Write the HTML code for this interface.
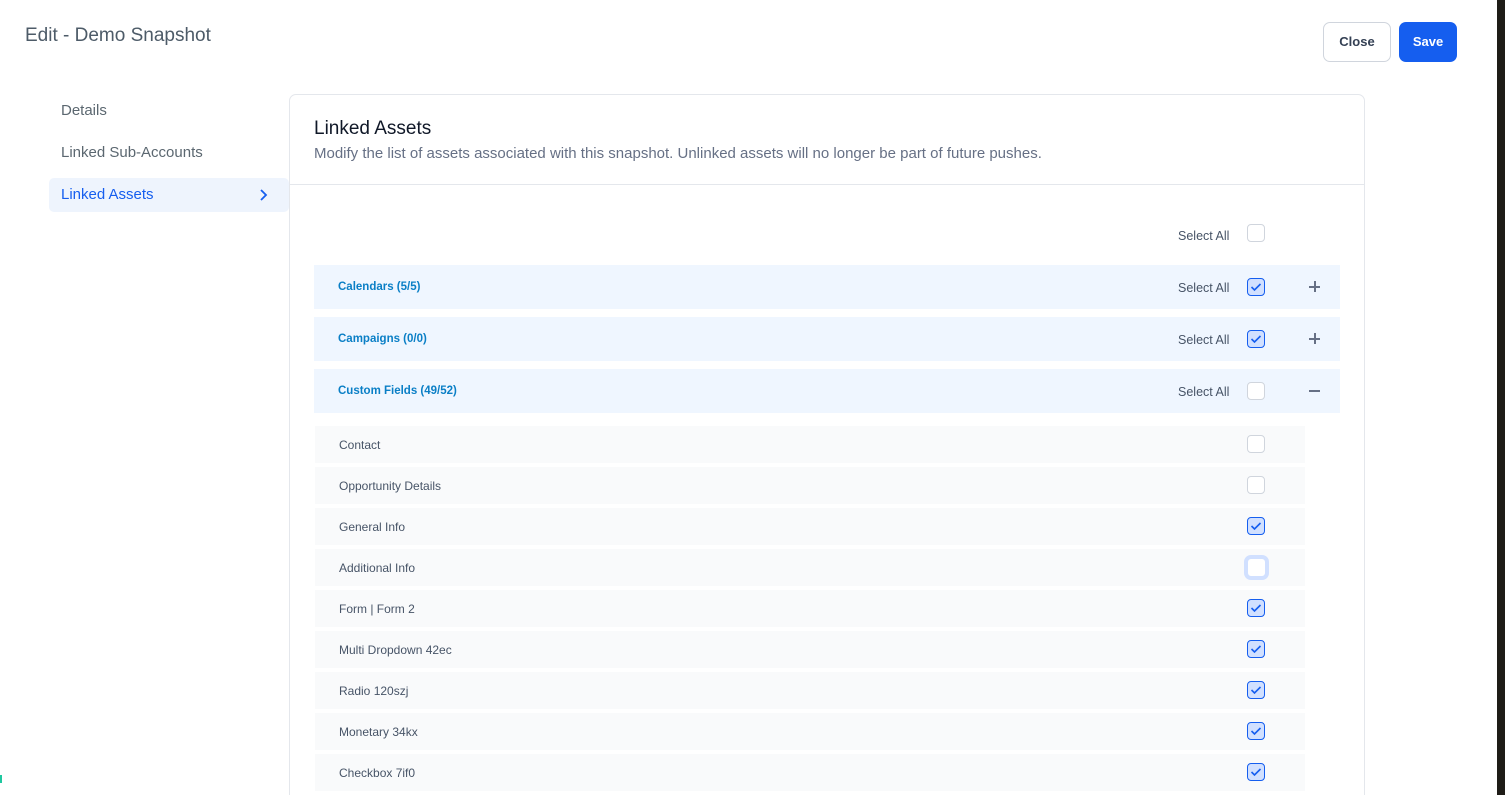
<!DOCTYPE html>
<html style="overflow:hidden;height:795px"><head><style>
*{box-sizing:border-box;margin:0;padding:0}
body{width:1505px;height:795px;overflow:hidden;background:#fff;font-family:"Liberation Sans",sans-serif;position:relative}
.abs{position:absolute}
.cb{position:absolute;width:18px;height:18px;border:1px solid #d0d5dd;border-radius:4px;background:#fff}
.cb.on{background:#d1e0ff;border:1.5px solid #155eef}
.cb.on svg{position:absolute;left:2px;top:3px}
.grp{position:absolute;left:314px;width:1026px;height:44px;background:#eff6ff}
.grp .t{position:absolute;left:24px;top:16px;font-size:11.5px;font-weight:bold;color:#0a7fc6}
.sa{position:absolute;font-size:12.5px;color:#475467}
.item{position:absolute;left:315px;width:990px;height:37px;background:#f9fafb}
.item .t{position:absolute;left:24px;top:12px;font-size:12px;color:#475467}
</style></head><body>
<div class="abs" style="left:25px;top:25px;font-size:19px;color:#4d5b68">Edit - Demo Snapshot</div>
<div class="abs" style="left:1323px;top:22px;width:68px;height:40px;border:1px solid #d0d5dd;border-radius:7px;font-size:13px;font-weight:bold;color:#344054;text-align:center;line-height:38px">Close</div>
<div class="abs" style="left:1399px;top:22px;width:58px;height:40px;background:#155eef;border-radius:7px;font-size:13px;font-weight:bold;color:#fff;text-align:center;line-height:40px">Save</div>
<div class="abs" style="left:1497px;top:0;width:8px;height:795px;background:#1e1c17"></div>
<div class="abs" style="left:0;top:775px;width:2px;height:8px;background:#1fc8a0"></div>

<div class="abs" style="left:61px;top:102px;font-size:15px;color:#5b6770">Details</div>
<div class="abs" style="left:61px;top:144px;font-size:15px;color:#5b6770">Linked Sub-Accounts</div>
<div class="abs" style="left:49px;top:178px;width:240px;height:34px;background:#eef4fd;border-radius:5px"></div>
<div class="abs" style="left:61px;top:186px;font-size:15px;color:#155eef">Linked Assets</div>
<svg class="abs" style="left:258px;top:188px" width="10" height="14" viewBox="0 0 10 14"><path d="M3 2l5 5-5 5" fill="none" stroke="#155eef" stroke-width="1.8"/></svg>

<div class="abs" style="left:289px;top:94px;width:1076px;height:720px;border:1px solid #e4e7ec;border-radius:7px"></div>
<div class="abs" style="left:290px;top:184px;width:1074px;height:1px;background:#e4e7ec"></div>
<div class="abs" style="left:314px;top:118px;font-size:19px;color:#101828">Linked Assets</div>
<div class="abs" style="left:314px;top:145px;font-size:15px;color:#667085">Modify the list of assets associated with this snapshot. Unlinked assets will no longer be part of future pushes.</div>

<div class="sa" style="left:1178px;top:229px">Select All</div>
<div class="cb" style="left:1247px;top:224px"></div>

<div class="grp" style="top:265px"><div class="t">Calendars (5/5)</div></div>
<div class="grp" style="top:317px"><div class="t">Campaigns (0/0)</div></div>
<div class="grp" style="top:369px"><div class="t">Custom Fields (49/52)</div></div>
<div class="sa" style="left:1178px;top:281px">Select All</div>
<div class="sa" style="left:1178px;top:333px">Select All</div>
<div class="sa" style="left:1178px;top:385px">Select All</div>
<div class="cb on" style="left:1247px;top:278px"><svg width="12" height="10"><path d="M1.5 5l3 3 6-6" fill="none" stroke="#155eef" stroke-width="1.6"/></svg></div>
<div class="cb on" style="left:1247px;top:330px"><svg width="12" height="10"><path d="M1.5 5l3 3 6-6" fill="none" stroke="#155eef" stroke-width="1.6"/></svg></div>
<div class="cb" style="left:1247px;top:382px"></div>
<div class="abs" style="left:1309px;top:286px;width:11px;height:1.5px;background:#667085"></div>
<div class="abs" style="left:1314px;top:281px;width:1.5px;height:11px;background:#667085"></div>
<div class="abs" style="left:1309px;top:338px;width:11px;height:1.5px;background:#667085"></div>
<div class="abs" style="left:1314px;top:333px;width:1.5px;height:11px;background:#667085"></div>
<div class="abs" style="left:1309px;top:390px;width:11px;height:1.5px;background:#667085"></div>

<div class="item" style="top:426px"><div class="t">Contact</div></div>
<div class="item" style="top:467px"><div class="t">Opportunity Details</div></div>
<div class="item" style="top:508px"><div class="t">General Info</div></div>
<div class="item" style="top:549px"><div class="t">Additional Info</div></div>
<div class="item" style="top:590px"><div class="t">Form | Form 2</div></div>
<div class="item" style="top:631px"><div class="t">Multi Dropdown 42ec</div></div>
<div class="item" style="top:672px"><div class="t">Radio 120szj</div></div>
<div class="item" style="top:713px"><div class="t">Monetary 34kx</div></div>
<div class="item" style="top:754px"><div class="t">Checkbox 7if0</div></div>

<div class="cb" style="left:1247px;top:435px"></div>
<div class="cb" style="left:1247px;top:476px"></div>
<div class="cb on" style="left:1247px;top:517px"><svg width="12" height="10"><path d="M1.5 5l3 3 6-6" fill="none" stroke="#155eef" stroke-width="1.6"/></svg></div>
<div class="cb" style="left:1244px;top:555px;width:25px;height:25px;border:4px solid #d1e0ff;border-radius:7px"></div>
<div class="cb on" style="left:1247px;top:599px"><svg width="12" height="10"><path d="M1.5 5l3 3 6-6" fill="none" stroke="#155eef" stroke-width="1.6"/></svg></div>
<div class="cb on" style="left:1247px;top:640px"><svg width="12" height="10"><path d="M1.5 5l3 3 6-6" fill="none" stroke="#155eef" stroke-width="1.6"/></svg></div>
<div class="cb on" style="left:1247px;top:681px"><svg width="12" height="10"><path d="M1.5 5l3 3 6-6" fill="none" stroke="#155eef" stroke-width="1.6"/></svg></div>
<div class="cb on" style="left:1247px;top:722px"><svg width="12" height="10"><path d="M1.5 5l3 3 6-6" fill="none" stroke="#155eef" stroke-width="1.6"/></svg></div>
<div class="cb on" style="left:1247px;top:763px"><svg width="12" height="10"><path d="M1.5 5l3 3 6-6" fill="none" stroke="#155eef" stroke-width="1.6"/></svg></div>
</body></html>
